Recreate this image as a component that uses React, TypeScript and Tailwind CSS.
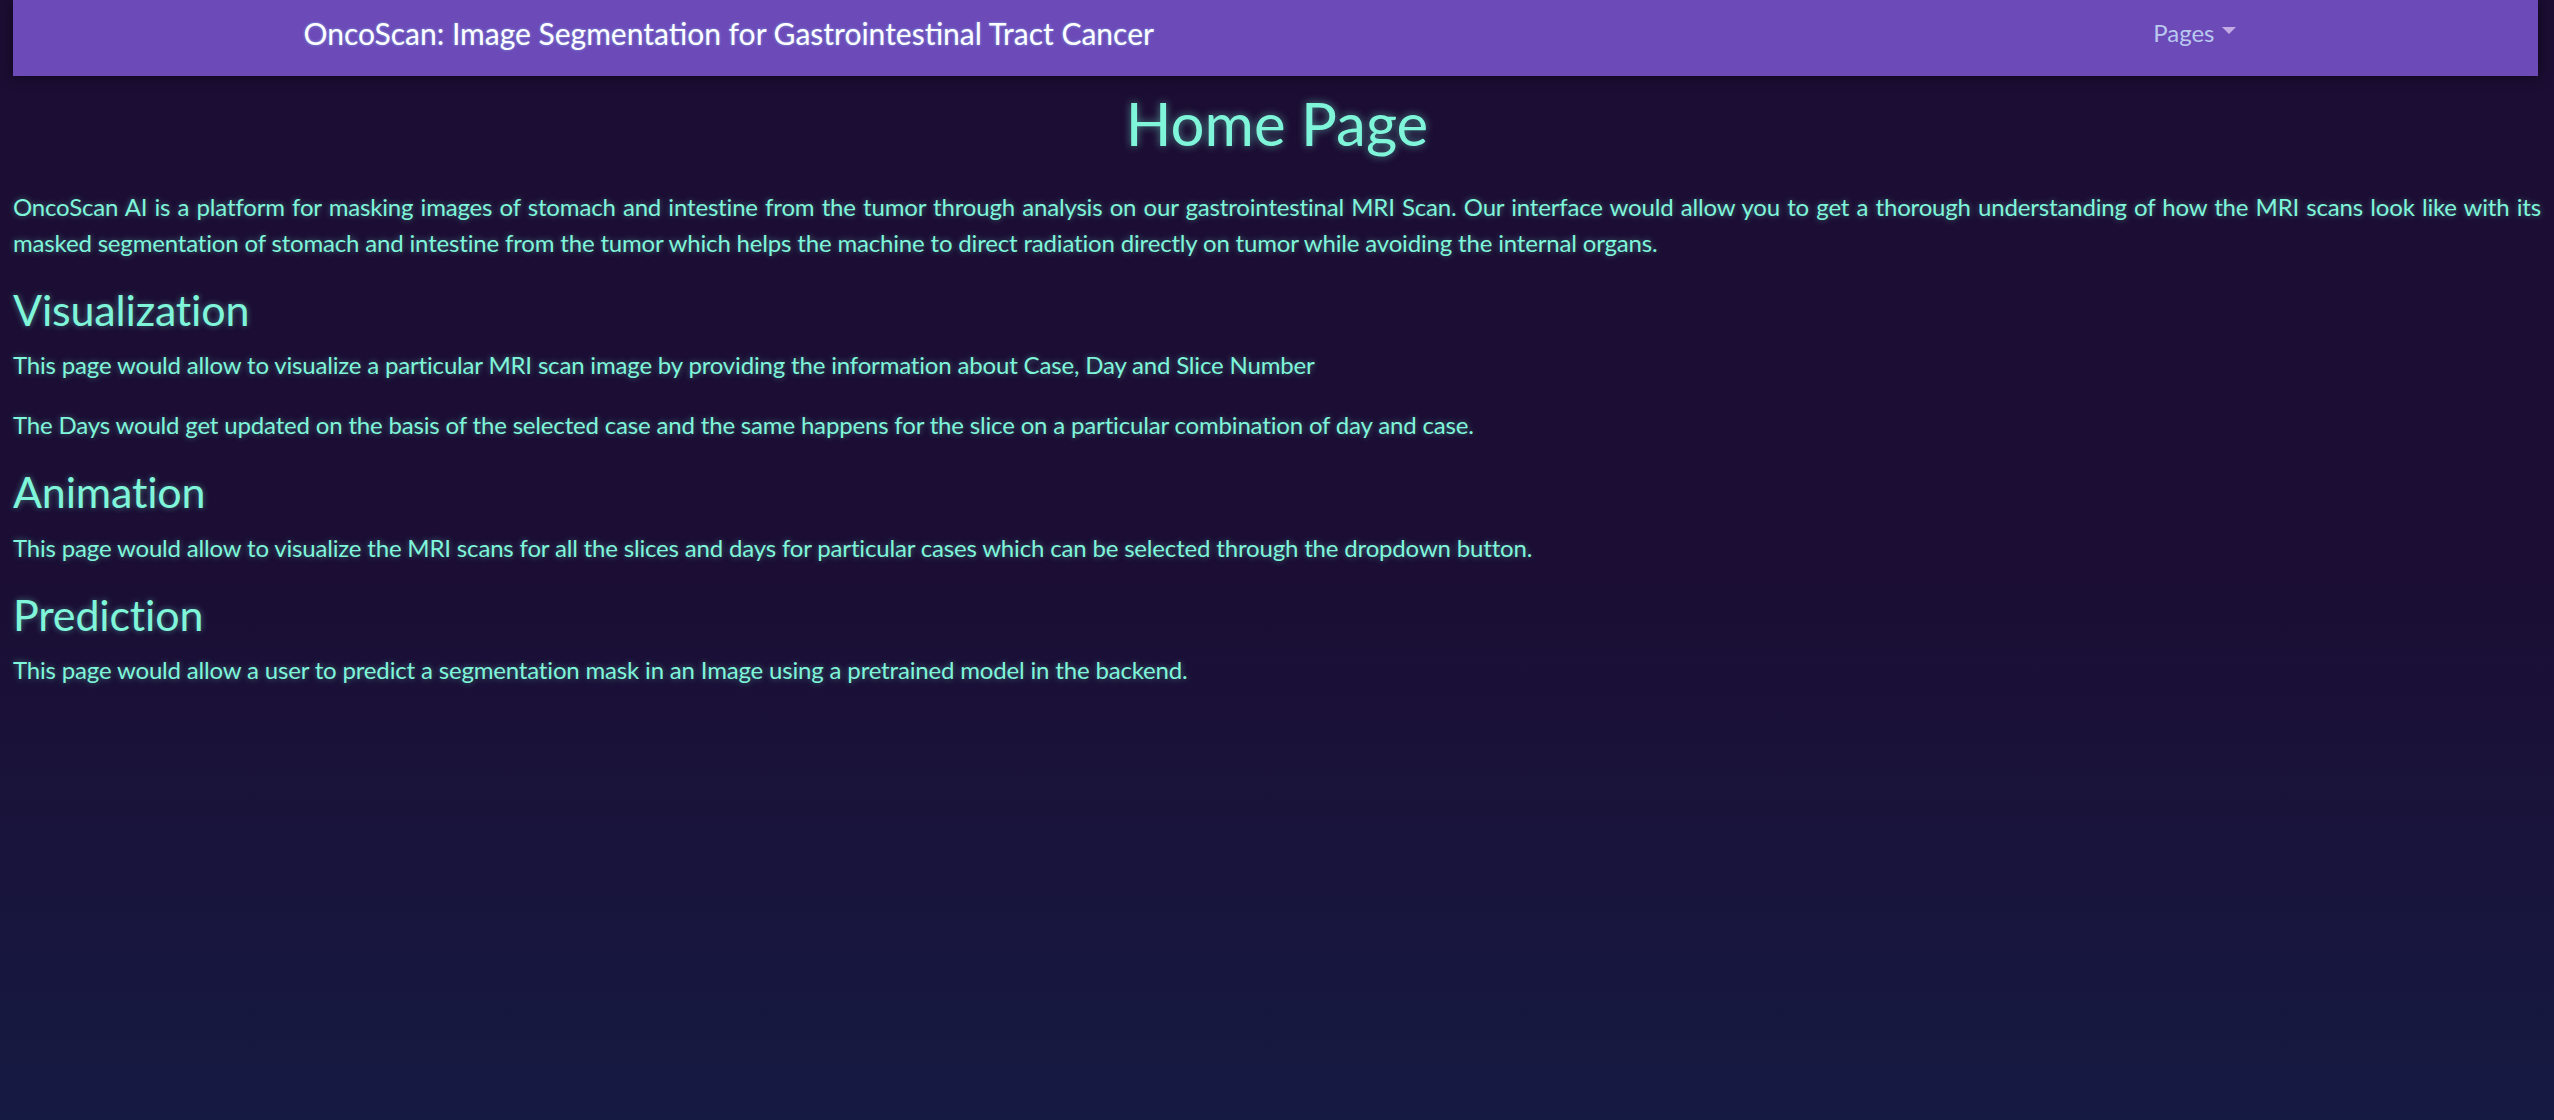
const glow = "[text-shadow:0_0_6px_rgba(120,245,215,0.45)]";

function Navbar() {
  return (
    <nav className="ml-[13px] mr-[16px] h-[76px] bg-[#6c4ab8] shadow-[0_0_12px_rgba(0,0,0,0.55)]">
      <div className="mx-auto flex w-[1980px] items-start justify-between px-[18px]">
        <a className="pt-[15px] text-[30px] leading-[36px] text-white [text-shadow:0_0_3px_rgba(150,220,255,0.6)]">
          OncoScan: Image Segmentation for Gastrointestinal Tract Cancer
        </a>
        <button className="flex items-center px-3 pt-[18px] text-[24px] leading-[29px] text-[#b9c8ef]">
          Pages
          <span className="ml-[7px] mb-[4px] h-0 w-0 border-x-[7px] border-t-[7px] border-x-transparent border-t-[#c3ace6]" />
        </button>
      </div>
    </nav>
  );
}

function Section({ title, children }: { title: string; children: React.ReactNode }) {
  return (
    <section>
      <h2 className={`mb-3 text-[43px] leading-[50.4px] ${glow}`}>{title}</h2>
      {children}
    </section>
  );
}

export default function App() {
  return (
    <div className="min-h-screen bg-linear-to-b from-[#1c0d33] via-[#1b0d34] to-[#151a42] pb-px font-['Lato',sans-serif] text-[#7ff5da]">
      <Navbar />
      <main className="px-[13px] text-[24px] leading-[36px]">
        <h1 className="mt-[11px] mb-[30px] text-center text-[60px] leading-[72px] [text-shadow:0_0_8px_rgba(120,245,215,0.55)]">
          Home Page
        </h1>
        <div className="tracking-[-0.17px]">
          <p className={`mb-6 text-justify ${glow}`}>
            OncoScan AI is a platform for masking images of stomach and intestine from the tumor through analysis on our gastrointestinal MRI Scan. Our interface would allow you to get a thorough understanding of how the MRI scans look like with its masked segmentation of stomach and intestine from the tumor which helps the machine to direct radiation directly on tumor while avoiding the internal organs.
          </p>
          <Section title="Visualization">
            <p className={`mb-6 ${glow}`}>
              This page would allow to visualize a particular MRI scan image by providing the information about Case, Day and Slice Number
            </p>
            <p className={`mb-6 ${glow}`}>
              The Days would get updated on the basis of the selected case and the same happens for the slice on a particular combination of day and case.
            </p>
          </Section>
          <Section title="Animation">
            <p className={`mb-6 ${glow}`}>
              This page would allow to visualize the MRI scans for all the slices and days for particular cases which can be selected through the dropdown button.
            </p>
          </Section>
          <Section title="Prediction">
            <p className={`mb-6 ${glow}`}>
              This page would allow a user to predict a segmentation mask in an Image using a pretrained model in the backend.
            </p>
          </Section>
        </div>
      </main>
    </div>
  );
}
